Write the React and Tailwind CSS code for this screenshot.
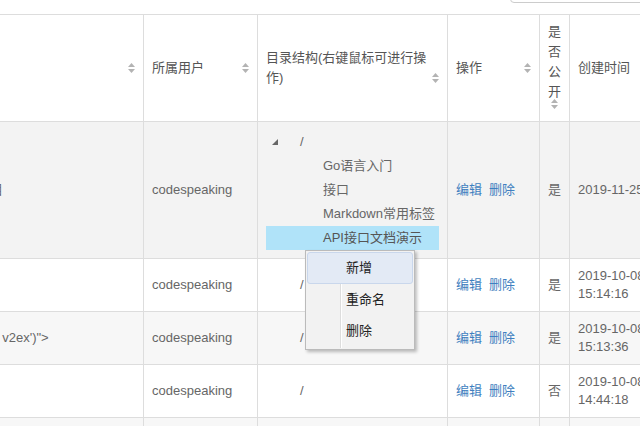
import React from "react";

const FONT = { fontFamily: '"Liberation Sans", "Noto Sans CJK SC", sans-serif' };

const SortIcon = ({ className = "" }) => (
  <svg width="7" height="10" viewBox="0 0 7 10" className={"shrink-0 " + className}>
    <path d="M0 4h7L3.5 0z" fill="#b3b3b3" />
    <path d="M0 6h7L3.5 10z" fill="#b3b3b3" />
  </svg>
);

const Tri = () => (
  <svg width="6" height="6" viewBox="0 0 6 6">
    <path d="M6 0v6H0z" fill="#666" />
  </svg>
);

const rows = [
  { title: "测试", user: "codespeaking", open: "是", date: "2019-10-08", time: "15:14:16" },
  { title: "<i onclick=\"alert('hello v2ex')\">", user: "codespeaking", open: "是", date: "2019-10-08", time: "15:13:36" },
  { title: "测试", user: "codespeaking", open: "否", date: "2019-10-08", time: "14:44:18" },
  { title: "测试", user: "codespeaking", open: "是", date: "2019-10-08", time: "14:40:02" },
];

const Actions = () => (
  <div className="flex gap-[7px] text-[#3f7fc0] whitespace-nowrap">
    <a>编辑</a>
    <a>删除</a>
  </div>
);

const App = () => {
  const td = "border border-[#ddd] px-2 py-2 align-middle";
  return (
    <div className="relative w-[640px] h-[426px] overflow-hidden bg-white text-[13px] text-[#666]" style={FONT}>
      <div className="h-[14px] flex justify-end">
        <div className="w-[140px] h-[34px] -mt-[31px] -mr-[10px] border border-[#ccc] rounded bg-white" />
      </div>
      <table className="table-fixed border-collapse w-[825px] -ml-[136px]">
        <colgroup>
          <col className="w-[279px]" />
          <col className="w-[114px]" />
          <col className="w-[190px]" />
          <col className="w-[92px]" />
          <col className="w-[30px]" />
          <col className="w-[120px]" />
        </colgroup>
        <thead>
          <tr className="h-[107px] text-[#555] leading-[20px]">
            <th className={td + " font-normal text-left"}>
              <div className="flex items-center justify-between gap-1">
                <span>文档名称</span>
                <SortIcon />
              </div>
            </th>
            <th className={td + " font-normal text-left"}>
              <div className="flex items-center justify-between gap-1">
                <span>所属用户</span>
                <SortIcon />
              </div>
            </th>
            <th className={td + " font-normal text-left"}>
              <div className="flex items-center justify-between gap-1">
                <span>目录结构(右键鼠标可进行操作)</span>
                <SortIcon className="mt-[20px]" />
              </div>
            </th>
            <th className={td + " font-normal text-left"}>
              <div className="flex items-center justify-between gap-1">
                <span>操作</span>
                <SortIcon />
              </div>
            </th>
            <th className="border border-[#ddd] px-[8px] pt-[7px] pb-1 align-top font-normal">
              <div className="flex flex-col items-center">
                <span className="w-[13px] break-all">是否公开</span>
                <SortIcon className="-mt-[3px]" />
              </div>
            </th>
            <th className={td + " font-normal text-left"}>
              <div className="flex items-center gap-1">
                <span>创建时间</span>
              </div>
            </th>
          </tr>
        </thead>
        <tbody className="leading-[18px]">
          <tr className="bg-[#f3f3f3]">
            <td className={td}>
              <div className="whitespace-nowrap overflow-hidden">接口文档在线演示项目</div>
            </td>
            <td className={td}>codespeaking</td>
            <td className={td}>
              <div className="flex flex-col whitespace-nowrap">
                <div className="h-[24px] flex items-center">
                  <span className="w-[34px] pl-[6px] flex items-center"><Tri /></span>
                  <span>/</span>
                </div>
                <div className="h-[24px] flex items-center pl-[57px]">Go语言入门</div>
                <div className="h-[24px] flex items-center pl-[57px]">接口</div>
                <div className="h-[24px] flex items-center pl-[57px]">Markdown常用标签</div>
                <div className="h-[24px] flex items-center pl-[57px] bg-[#b0e3f9] text-[#555]">API接口文档演示</div>
              </div>
            </td>
            <td className={td}><Actions /></td>
            <td className={td + " text-center px-0"}>是</td>
            <td className={td + " whitespace-nowrap"}>2019-11-25</td>
          </tr>
          {rows.map((r, i) => (
            <tr key={i} className={i % 2 === 1 ? "bg-[#f7f7f7]" : "bg-white"}>
              <td className={td}>
                <div className="whitespace-nowrap overflow-hidden">{r.title}</div>
              </td>
              <td className={td}>{r.user}</td>
              <td className={td}>
                <div className="pl-[34px]">/</div>
              </td>
              <td className={td}><Actions /></td>
              <td className={td + " text-center px-0"}>{r.open}</td>
              <td className={td}>{r.date} {r.time}</td>
            </tr>
          ))}
        </tbody>
      </table>

      <div className="absolute left-[305px] top-[250px] w-[110px] h-[100px] border border-[#bbb] bg-[#f2f2f2] shadow-[2px_2px_3px_rgba(0,0,0,0.25)] p-[1px] text-[#222]">
        <div className="relative flex flex-col h-full">
          <div className="absolute left-[33px] top-0 bottom-0 w-[2px] border-l border-[#ddd] border-r border-r-white" />
          <div className="relative h-[32px] flex items-center pl-[38px] bg-[#e3eaf5] border border-[#c9d7ec] rounded-[3px]">新增</div>
          <div className="relative h-[31px] flex items-center pl-[39px]">重命名</div>
          <div className="relative h-[31px] flex items-center pl-[39px]">删除</div>
        </div>
      </div>
    </div>
  );
};

export default App;
